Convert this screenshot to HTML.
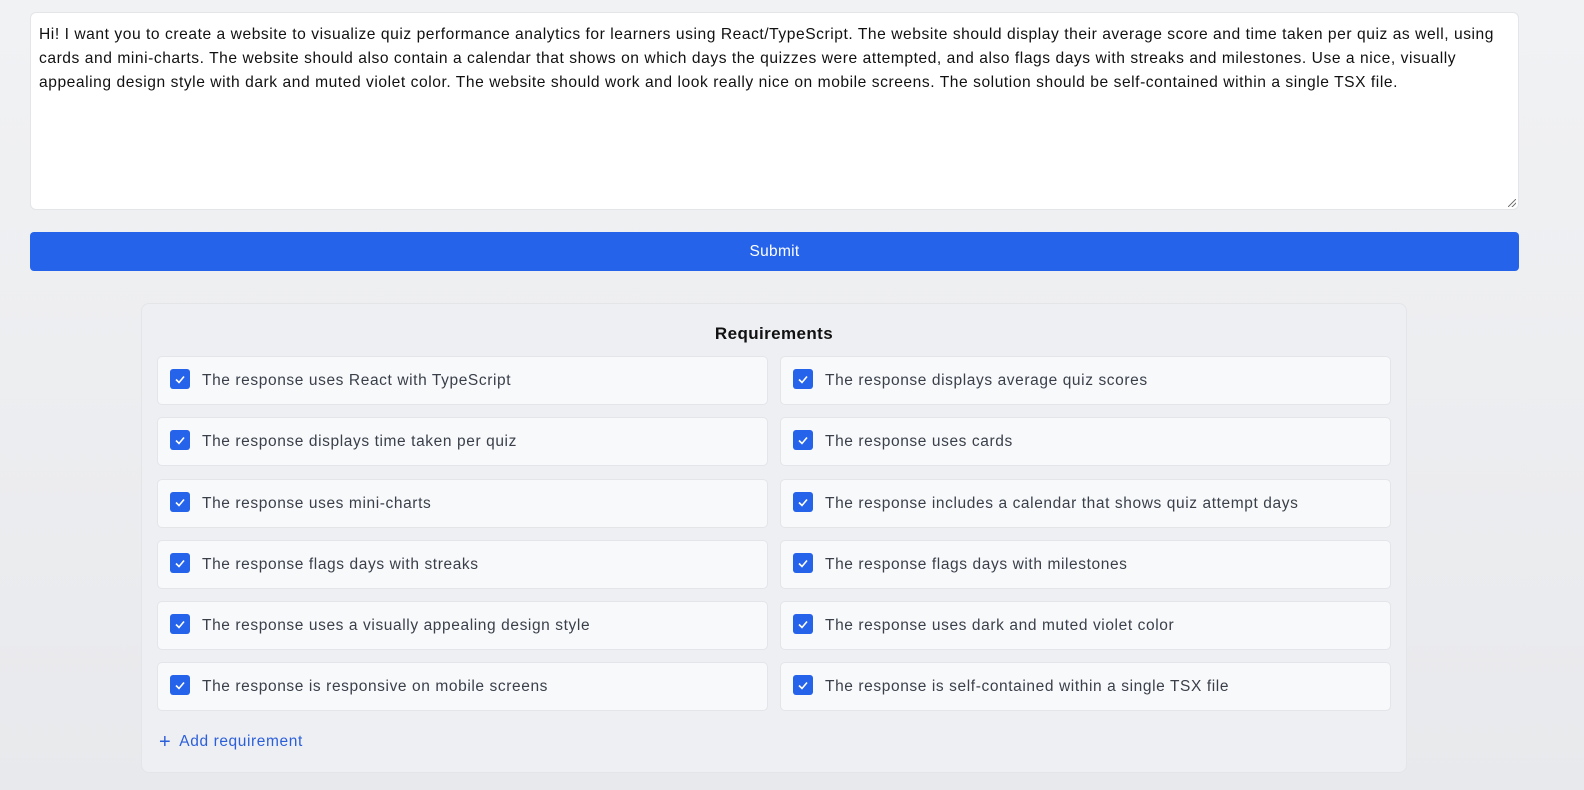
<!DOCTYPE html>
<html><head><meta charset="utf-8"><style>
*{box-sizing:border-box;margin:0;padding:0}
body{width:1584px;height:790px;overflow:hidden;background:linear-gradient(#f1f2f4,#e8e9ec);font-family:"Liberation Sans",sans-serif;position:relative}
.ta{position:absolute;left:30px;top:12px;width:1489px;height:198px;background:#fff;border:1px solid #e3e5e8;border-radius:6px;padding:10px 8px;font-size:15.6px;line-height:24px;color:#111;white-space:nowrap;letter-spacing:0.55px}
.rz{position:absolute;right:2px;bottom:2px;width:8px;height:8px;background:linear-gradient(135deg,transparent 45%,#777 45%,#777 55%,transparent 55%,transparent 70%,#777 70%,#777 80%,transparent 80%)}
.btn{position:absolute;left:30px;top:232px;width:1489px;height:39px;background:#2563eb;border-radius:4px;color:#fff;font-size:15.5px;text-align:center;line-height:39px;letter-spacing:0.3px}
.panel{position:absolute;left:141px;top:303px;width:1266px;height:470px;border:1px solid #e4e5e8;border-radius:8px;background:#eeeff2}
h2{position:absolute;top:20px;left:0;width:100%;text-align:center;font-size:17px;font-weight:bold;color:#111;letter-spacing:0.4px}
.it{position:absolute;width:611px;height:49px;background:#f8f9fa;border:1px solid #e3e5e8;border-radius:5px}
.cb{position:absolute;left:12px;top:12px;width:20px;height:20px;background:#2563eb;border-radius:3px}
.it span{position:absolute;left:44px;top:15px;font-size:15.5px;color:#3a3f4a;letter-spacing:0.6px;white-space:nowrap}
.add{position:absolute;left:17px;top:427px;color:#2b5fd9;font-size:15.5px;letter-spacing:0.6px}
</style></head><body>
<div class="ta">Hi! I want you to create a website to visualize quiz performance analytics for learners using React/TypeScript. The website should display their average score and time taken per quiz as well, using<br>cards and mini-charts. The website should also contain a calendar that shows on which days the quizzes were attempted, and also flags days with streaks and milestones. Use a nice, visually<br>appealing design style with dark and muted violet color. The website should work and look really nice on mobile screens. The solution should be self-contained within a single TSX file.<div class="rz"></div></div>
<div class="btn">Submit</div>
<div class="panel"><h2>Requirements</h2>
<div class="it" style="left:15px;top:52px"><div class="cb"><svg width="20" height="20"><path d="M6 10.5l3 3 5-6" stroke="#fff" stroke-width="1.6" fill="none"/></svg></div><span>The response uses React with TypeScript</span></div>
<div class="it" style="left:638px;top:52px"><div class="cb"><svg width="20" height="20"><path d="M6 10.5l3 3 5-6" stroke="#fff" stroke-width="1.6" fill="none"/></svg></div><span>The response displays average quiz scores</span></div>
<div class="it" style="left:15px;top:113px"><div class="cb"><svg width="20" height="20"><path d="M6 10.5l3 3 5-6" stroke="#fff" stroke-width="1.6" fill="none"/></svg></div><span>The response displays time taken per quiz</span></div>
<div class="it" style="left:638px;top:113px"><div class="cb"><svg width="20" height="20"><path d="M6 10.5l3 3 5-6" stroke="#fff" stroke-width="1.6" fill="none"/></svg></div><span>The response uses cards</span></div>
<div class="it" style="left:15px;top:175px"><div class="cb"><svg width="20" height="20"><path d="M6 10.5l3 3 5-6" stroke="#fff" stroke-width="1.6" fill="none"/></svg></div><span>The response uses mini-charts</span></div>
<div class="it" style="left:638px;top:175px"><div class="cb"><svg width="20" height="20"><path d="M6 10.5l3 3 5-6" stroke="#fff" stroke-width="1.6" fill="none"/></svg></div><span>The response includes a calendar that shows quiz attempt days</span></div>
<div class="it" style="left:15px;top:236px"><div class="cb"><svg width="20" height="20"><path d="M6 10.5l3 3 5-6" stroke="#fff" stroke-width="1.6" fill="none"/></svg></div><span>The response flags days with streaks</span></div>
<div class="it" style="left:638px;top:236px"><div class="cb"><svg width="20" height="20"><path d="M6 10.5l3 3 5-6" stroke="#fff" stroke-width="1.6" fill="none"/></svg></div><span>The response flags days with milestones</span></div>
<div class="it" style="left:15px;top:297px"><div class="cb"><svg width="20" height="20"><path d="M6 10.5l3 3 5-6" stroke="#fff" stroke-width="1.6" fill="none"/></svg></div><span>The response uses a visually appealing design style</span></div>
<div class="it" style="left:638px;top:297px"><div class="cb"><svg width="20" height="20"><path d="M6 10.5l3 3 5-6" stroke="#fff" stroke-width="1.6" fill="none"/></svg></div><span>The response uses dark and muted violet color</span></div>
<div class="it" style="left:15px;top:358px"><div class="cb"><svg width="20" height="20"><path d="M6 10.5l3 3 5-6" stroke="#fff" stroke-width="1.6" fill="none"/></svg></div><span>The response is responsive on mobile screens</span></div>
<div class="it" style="left:638px;top:358px"><div class="cb"><svg width="20" height="20"><path d="M6 10.5l3 3 5-6" stroke="#fff" stroke-width="1.6" fill="none"/></svg></div><span>The response is self-contained within a single TSX file</span></div>
<div class="add"><span style="font-size:20px;margin-right:8px;vertical-align:-2px">+</span>Add requirement</div>
</div>
</body></html>
